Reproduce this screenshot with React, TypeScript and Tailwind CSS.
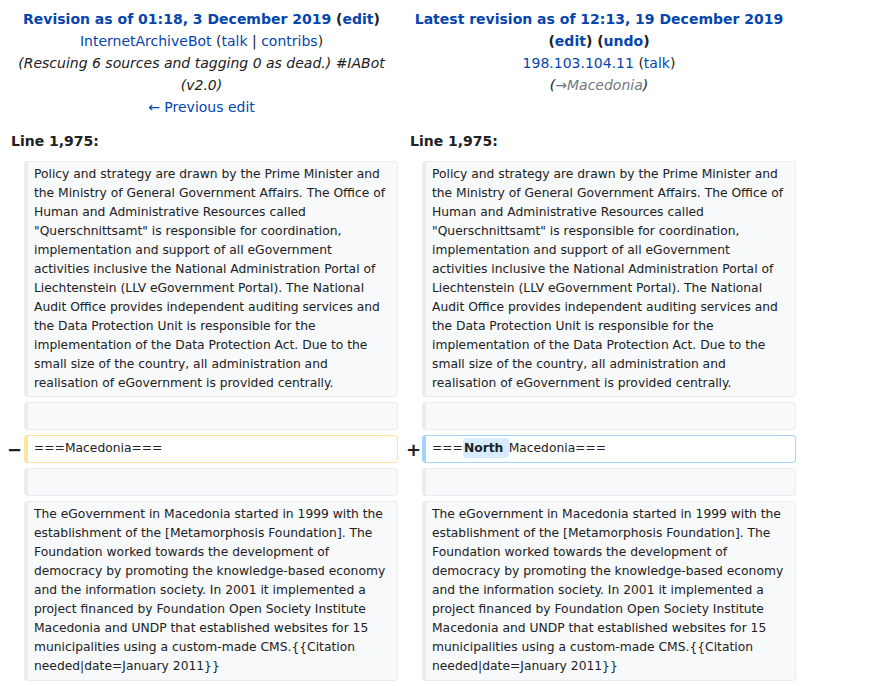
import React from "react";

const link = "text-[#0645ad]";

const oldTop =
  "Policy and strategy are drawn by the Prime Minister and the Ministry of General Government Affairs. The Office of Human and Administrative Resources called \"Querschnittsamt\" is responsible for coordination, implementation and support of all eGovernment activities inclusive the National Administration Portal of Liechtenstein (LLV eGovernment Portal). The National Audit Office provides independent auditing services and the Data Protection Unit is responsible for the implementation of the Data Protection Act. Due to the small size of the country, all administration and realisation of eGovernment is provided centrally.";

const bottom =
  "The eGovernment in Macedonia started in 1999 with the establishment of the [Metamorphosis Foundation]. The Foundation worked towards the development of democracy by promoting the knowledge-based economy and the information society. In 2001 it implemented a project financed by Foundation Open Society Institute Macedonia and UNDP that established websites for 15 municipalities using a custom-made CMS.{{Citation needed|date=January 2011}}";

function Box({ kind, children, pb = "pb-[4px]" }: { kind: "ctx" | "del" | "add"; children: React.ReactNode; pb?: string }) {
  const styles = {
    ctx: "bg-[#f8f9fa] border-[#eaecf0]",
    del: "bg-white border-[#ffe49c]",
    add: "bg-white border-[#a3d3ff]",
  }[kind];
  return (
    <div className={`border border-l-4 rounded-[4px] pl-[6px] pr-[6px] pt-[3px] ${pb} text-[12.3px] leading-[19px] break-words ${styles}`}>
      {children}
    </div>
  );
}

export default function App() {
  return (
    <div className="w-[874px] h-[686px] overflow-hidden bg-white font-['DejaVu_Sans',sans-serif] text-[#202122] text-[14px] pt-[8px]">
      <div className="grid grid-cols-[19px_374px_24px_374px] ml-[5px]">
        {/* Revision headers */}
        <div className="col-span-2 text-center leading-[22px]">
          <div className="font-bold">
            <span className={link}>Revision as of 01:18, 3 December 2019</span> (<span className={link}>edit</span>)
          </div>
          <div>
            <span className={link}>InternetArchiveBot</span> (<span className={link}>talk</span> | <span className={link}>contribs</span>)
          </div>
          <div className="italic text-[#202122]">(Rescuing 6 sources and tagging 0 as dead.) #IABot (v2.0)</div>
          <div>
            <span className={link}>← Previous edit</span>
          </div>
        </div>
        <div className="col-span-2 text-center leading-[22px] pl-[4px]">
          <div className="font-bold">
            <span className={link}>Latest revision as of 12:13, 19 December 2019</span> (<span className={link}>edit</span>) (<span className={link}>undo</span>)
          </div>
          <div>
            <span className={link}>198.103.104.11</span> (<span className={link}>talk</span>)
          </div>
          <div className="italic">
            (<span className="text-[#72777d]">→Macedonia</span>)
          </div>
        </div>

        {/* Line numbers */}
        <div className="col-span-2 font-bold leading-[22px] pl-[6px] pt-[12px] pb-[9px]">Line 1,975:</div>
        <div className="col-span-2 font-bold leading-[22px] pl-[12px] pt-[12px] pb-[9px]">Line 1,975:</div>

        {/* Context */}
        <div />
        <Box kind="ctx" pb="pb-[3px]">{oldTop}</Box>
        <div />
        <Box kind="ctx" pb="pb-[3px]">{oldTop}</Box>

        <div className="col-span-4 h-[5px]" />
        <div />
        <Box kind="ctx">&nbsp;</Box>
        <div />
        <Box kind="ctx">&nbsp;</Box>

        <div className="col-span-4 h-[5px]" />
        <div className="flex items-center justify-end pr-[2px] font-bold text-[18px]">−</div>
        <Box kind="del">===Macedonia===</Box>
        <div className="flex items-center justify-end pr-[1px] font-bold text-[18px]">+</div>
        <Box kind="add">
          ===<span className="bg-[#d8ecff] font-bold rounded-[4px] px-[1px] py-[3px]">North </span>Macedonia===
        </Box>

        <div className="col-span-4 h-[5px]" />
        <div />
        <Box kind="ctx">&nbsp;</Box>
        <div />
        <Box kind="ctx">&nbsp;</Box>

        <div className="col-span-4 h-[5px]" />
        <div />
        <Box kind="ctx">{bottom}</Box>
        <div />
        <Box kind="ctx">{bottom}</Box>
      </div>
    </div>
  );
}
